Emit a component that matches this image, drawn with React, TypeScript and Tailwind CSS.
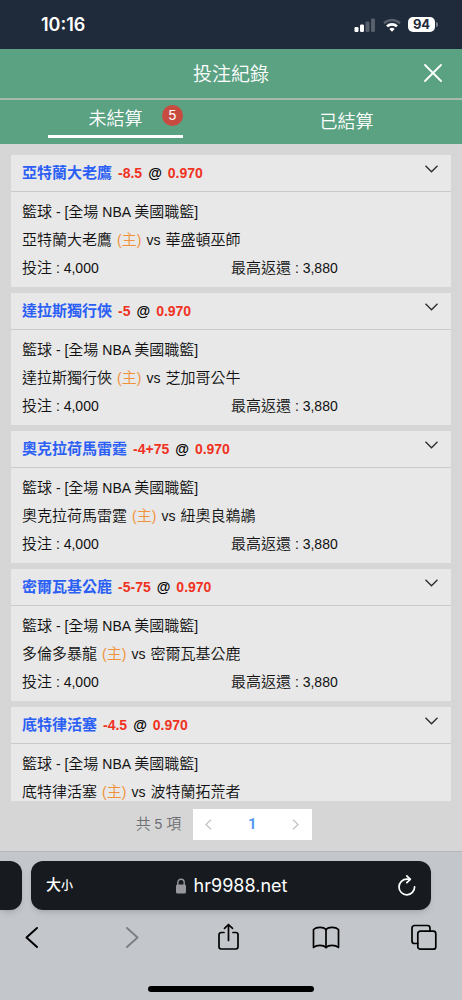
import type { ReactNode } from 'react';

interface Bet {
  pick: string;
  line: string;
  odds: string;
  league: string;
  home: string;
  away: string;
  stake: string;
  payout: string;
}

const LEAGUE = '籃球 - [全場 NBA 美國職籃]';

const BETS: Bet[] = [
  { pick: '亞特蘭大老鷹', line: '-8.5', odds: '0.970', league: LEAGUE, home: '亞特蘭大老鷹', away: '華盛頓巫師', stake: '4,000', payout: '3,880' },
  { pick: '達拉斯獨行俠', line: '-5', odds: '0.970', league: LEAGUE, home: '達拉斯獨行俠', away: '芝加哥公牛', stake: '4,000', payout: '3,880' },
  { pick: '奧克拉荷馬雷霆', line: '-4+75', odds: '0.970', league: LEAGUE, home: '奧克拉荷馬雷霆', away: '紐奧良鵜鶘', stake: '4,000', payout: '3,880' },
  { pick: '密爾瓦基公鹿', line: '-5-75', odds: '0.970', league: LEAGUE, home: '多倫多暴龍', away: '密爾瓦基公鹿', stake: '4,000', payout: '3,880' },
  { pick: '底特律活塞', line: '-4.5', odds: '0.970', league: LEAGUE, home: '底特律活塞', away: '波特蘭拓荒者', stake: '4,000', payout: '3,880' },
];

// Latin runs are set one pixel smaller than the Chinese text around them
function Mixed({ text }: { text: string }) {
  return (
    <>
      {text.split(/([\x20-\x7e]+)/).map((part, i) =>
        i % 2 ? <span key={i} className="text-[14px]">{part}</span> : part
      )}
    </>
  );
}

function StatusBar() {
  return (
    <div className="flex h-[49px] shrink-0 items-center justify-between bg-[#1f2a3a] pr-6 pl-[41px] text-white">
      <span className="font-['Inter',sans-serif] text-[18px] font-semibold">10:16</span>
      <div className="flex items-center gap-[7px]">
        <svg width="22" height="14" viewBox="0 0 22 14" fill="currentColor">
          <rect x="0.5" y="9" width="4" height="5" rx="1.2" />
          <rect x="6" y="6.5" width="4" height="7.5" rx="1.2" />
          <rect x="11.5" y="3.5" width="4" height="10.5" rx="1.2" opacity="0.25" />
          <rect x="17" y="0.5" width="4" height="13.5" rx="1.2" opacity="0.25" />
        </svg>
        <svg width="18" height="14" viewBox="0 0 18 14" fill="none" stroke="currentColor" strokeWidth="2.6">
          <path d="M1 5.2a11.5 11.5 0 0 1 16 0" opacity="0.25" />
          <path d="M4 8.4a7.2 7.2 0 0 1 10 0" />
          <path d="M9 13.8 6.3 11a3.9 3.9 0 0 1 5.4 0Z" fill="currentColor" stroke="none" />
        </svg>
        <div className="flex items-center gap-px">
          <span className="flex h-[15px] w-[27px] items-center justify-center rounded-[5px] bg-white font-['Inter',sans-serif] text-[13px] leading-none font-bold text-[#1f2a3a]">
            94
          </span>
          <span className="h-[5px] w-[2px] rounded-r bg-white/40" />
        </div>
      </div>
    </div>
  );
}

function Header() {
  return (
    <header className="relative flex h-[49px] shrink-0 items-center justify-center bg-[#5ba283] pt-1 text-white">
      <h1 className="text-[19px] font-[350]">投注紀錄</h1>
      <button type="button" aria-label="關閉" className="absolute top-[15px] right-5">
        <svg width="18" height="18" viewBox="0 0 18 18" fill="none" stroke="currentColor" strokeWidth="1.8" strokeLinecap="round">
          <path d="M1 1l16 16M17 1L1 17" />
        </svg>
      </button>
    </header>
  );
}

function Tabs() {
  return (
    <div role="tablist" className="grid h-[46px] shrink-0 grid-cols-2 border-t-2 border-[#a9b9b0] bg-[#5ba283] text-[18px] font-[350] text-white">
      <button type="button" role="tab" aria-selected="true" className="relative mx-12 mb-1.5 flex items-center justify-center border-b-[3px] border-white pt-[3px]">
        未結算
        <span className="absolute top-[5px] right-0 flex size-[21px] items-center justify-center rounded-full bg-[#c84b40] text-[14px]">
          5
        </span>
      </button>
      <button type="button" role="tab" aria-selected="false" className="flex items-center justify-center">
        已結算
      </button>
    </div>
  );
}

function BetCard({ bet }: { bet: Bet }) {
  return (
    <article className="bg-[#e8e8e8] text-[15px] text-[#111]">
      <div className="flex h-[37px] items-center justify-between border-b border-[#cacaca] pr-[13px] pl-[11px]">
        <h2 className="flex items-center gap-1.5 text-[14px] font-bold text-black">
          <span className="text-[15px] text-[#2b5ff5]">{bet.pick}</span>
          <span className="text-[#f0321f]">{bet.line}</span>
          <span>@</span>
          <span className="text-[#f0321f]">{bet.odds}</span>
        </h2>
        <button type="button" aria-label="展開" className="pb-2">
          <svg width="13" height="8" viewBox="0 0 13 8" fill="none" stroke="#2a2a2a" strokeWidth="1.3">
            <path d="M0.5 0.8l6 6 6-6" />
          </svg>
        </button>
      </div>
      <div className="px-[11px] pt-1.5 pb-[5px] leading-7 font-[350]">
        <p><Mixed text={bet.league} /></p>
        <p className="flex gap-[5px]">
          <span>{bet.home}</span>
          <span className="text-[#f0923a]"><Mixed text="(主)" /></span>
          <span className="text-[14px]">vs</span>
          <span>{bet.away}</span>
        </p>
        <div className="grid grid-cols-2">
          <p><Mixed text={`投注 : ${bet.stake}`} /></p>
          <p><Mixed text={`最高返還 : ${bet.payout}`} /></p>
        </div>
      </div>
    </article>
  );
}

function Pagination() {
  return (
    <nav className="flex h-[50px] shrink-0 items-center justify-center gap-3 pr-[14px] pb-[3px] text-[14px] text-[#6c6e72]">
      <span className="text-[15px] font-[350]"><Mixed text="共 5 項" /></span>
      <div className="flex h-[31px] w-[119px] items-center justify-between bg-white pr-[13px] pl-3">
        <button type="button" aria-label="上一頁" disabled>
          <svg width="7" height="11" viewBox="0 0 7 11" fill="none" stroke="#c3c6cd" strokeWidth="1.4">
            <path d="M6 0.7L1 5.5l5 4.8" />
          </svg>
        </button>
        <button type="button" aria-current="page" className="font-['Roboto',sans-serif] text-[15px] font-bold text-[#549bf5]">1</button>
        <button type="button" aria-label="下一頁" disabled>
          <svg width="7" height="11" viewBox="0 0 7 11" fill="none" stroke="#c3c6cd" strokeWidth="1.4">
            <path d="M1 0.7l5 4.8-5 4.8" />
          </svg>
        </button>
      </div>
    </nav>
  );
}

function ToolButton({ label, disabled, children }: { label: string; disabled?: boolean; children: ReactNode }) {
  return (
    <button type="button" aria-label={label} disabled={disabled} className="flex size-7 items-center justify-center text-black disabled:text-[#7c7e82]">
      <svg width="28" height="28" viewBox="0 0 28 28" fill="none" stroke="currentColor" strokeWidth="1.7" strokeLinecap="round" strokeLinejoin="round">
        {children}
      </svg>
    </button>
  );
}

function BrowserBar() {
  return (
    <footer className="flex h-[149px] shrink-0 flex-col border-t border-[#b4b6b9] bg-[#c3c6cb] pt-[9px]">
      <div className="flex h-[49px] shrink-0 gap-[9px] pr-[31px]">
        <div className="w-[22px] rounded-r-xl bg-[#171b20] shadow-md" />
        <div className="flex flex-1 items-center justify-between rounded-xl bg-[#171b20] px-[15px] text-white shadow-md">
          <button type="button" aria-label="文字大小" className="flex w-7 items-baseline font-medium">
            <span className="text-[15px]">大</span>
            <span className="text-[12px]">小</span>
          </button>
          <div className="flex items-center gap-[7px]">
            <svg width="12" height="16" viewBox="0 0 12 16" fill="none">
              <path d="M2.8 7V4.4a3.2 3.2 0 0 1 6.4 0V7" stroke="#98989e" strokeWidth="1.4" />
              <rect x="1" y="6.5" width="10" height="9" rx="1.6" fill="#98989e" />
            </svg>
            <span className="font-['Inter',sans-serif] text-[18px]">hr9988.net</span>
          </div>
          <button type="button" aria-label="重新載入" className="flex w-7 justify-end">
            <svg width="18" height="21" viewBox="0 0 18 21" fill="none" stroke="currentColor" strokeWidth="1.7" strokeLinecap="round" strokeLinejoin="round">
              <path d="M16.6 11.8A7.8 7.8 0 1 1 9 4.2h3.2" />
              <path d="M8.8 0.9l3.5 3.4-3.5 3.4" />
            </svg>
          </button>
        </div>
      </div>
      <div className="mt-[13px] flex justify-between pr-6 pl-[18px]">
        <ToolButton label="返回">
          <path d="M19 5L8.5 14.5L19 24" strokeWidth="2" />
        </ToolButton>
        <ToolButton label="前進" disabled>
          <path d="M11 5l10.5 9.5L11 24" strokeWidth="1.9" />
        </ToolButton>
        <ToolButton label="分享">
          <path d="M10 9.5H7.2A2.2 2.2 0 0 0 5 11.7v12.1A2.2 2.2 0 0 0 7.2 26h14.6a2.2 2.2 0 0 0 2.2-2.2V11.7a2.2 2.2 0 0 0-2.2-2.2H19" />
          <path d="M14.5 17.5V1.5M10.5 5.3l4-3.8 4 3.8" />
        </ToolButton>
        <ToolButton label="書籤">
          <path d="M14 6.5C11.5 3.5 4.500 3.700 1.500 6.500V24.500C4.500 21.700 11.500 21.700 14 24.500C16.500 21.700 23.500 21.700 26.500 24.500V6.500C23.500 3.700 16.500 3.500 14 6.500Z" />
          <path d="M14 6.5v18" />
        </ToolButton>
        <ToolButton label="分頁">
          <path d="M7.8 20.5H4.5A2.5 2.5 0 0 1 2 18V5a2.5 2.5 0 0 1 2.500-2.500H17.500A2.500 2.500 0 0 1 20 5v3" />
          <rect x="7.8" y="8.2" width="18" height="18" rx="2.5" />
        </ToolButton>
      </div>
      <div className="mx-auto mt-auto mb-2 h-[6px] w-[36%] rounded-full bg-black" />
    </footer>
  );
}

export default function App() {
  return (
    <div className="flex h-screen flex-col bg-[#d6d6d6] font-['Liberation_Sans','Noto_Sans_CJK_TC',sans-serif]">
      <StatusBar />
      <Header />
      <Tabs />
      <main className="mx-[11px] mt-[11px] flex min-h-0 flex-1 flex-col gap-1.5 overflow-y-auto [scrollbar-width:none]">
        {BETS.map((bet) => (
          <BetCard key={bet.pick} bet={bet} />
        ))}
      </main>
      <Pagination />
      <BrowserBar />
    </div>
  );
}
